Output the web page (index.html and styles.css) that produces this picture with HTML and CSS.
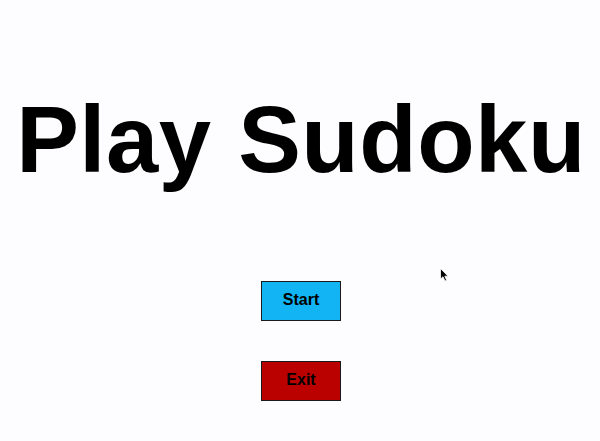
FILE: index.html
```html
<!DOCTYPE html>
<html>
<head>
<meta charset="utf-8">
<link rel="stylesheet" href="styles.css">
</head>
<body>
<main class="screen">
  <h1 class="title">Play Sudoku</h1>
  <div class="menu">
    <button class="btn btn-start">Start</button>
    <button class="btn btn-exit">Exit</button>
  </div>
  <svg class="cursor" width="12" height="16" viewBox="0 0 12 16">
    <path d="M0.5 0.5 L0.5 11 L3 8.8 L5 13 L6.6 12.2 L4.8 8.2 L8 8.2 Z" fill="#000" stroke="#fff" stroke-width="0.8"/>
  </svg>
</main>
</body>
</html>
```
FILE: styles.css
```css
html, body {
  margin: 0;
  padding: 0;
  background: #fdfcfe;
}
.screen {
  position: relative;
  width: 600px;
  height: 441px;
  display: flex;
  flex-direction: column;
  align-items: center;
  font-family: "Liberation Sans", Arial, sans-serif;
}
.title {
  margin: 85px 0 0 0;
  font-size: 94px;
  line-height: 110px;
  font-weight: bold;
  letter-spacing: 0.5px;
  padding-left: 2px;
  color: #000;
  white-space: nowrap;
}
.menu {
  margin-top: 86px;
  display: flex;
  flex-direction: column;
  align-items: center;
  gap: 40px;
  padding-left: 2px;
}
.btn {
  width: 80px;
  height: 40px;
  border: 1px solid #1a1a1a;
  box-sizing: border-box;
  font-family: "Liberation Sans", Arial, sans-serif;
  font-weight: bold;
  font-size: 16px;
  color: #000;
  padding: 0 0 2px 0;
}
.btn-start { background: #12b4f4; }
.btn-exit { background: #bb0000; }
.cursor {
  position: absolute;
  left: 440px;
  top: 268px;
}
```
